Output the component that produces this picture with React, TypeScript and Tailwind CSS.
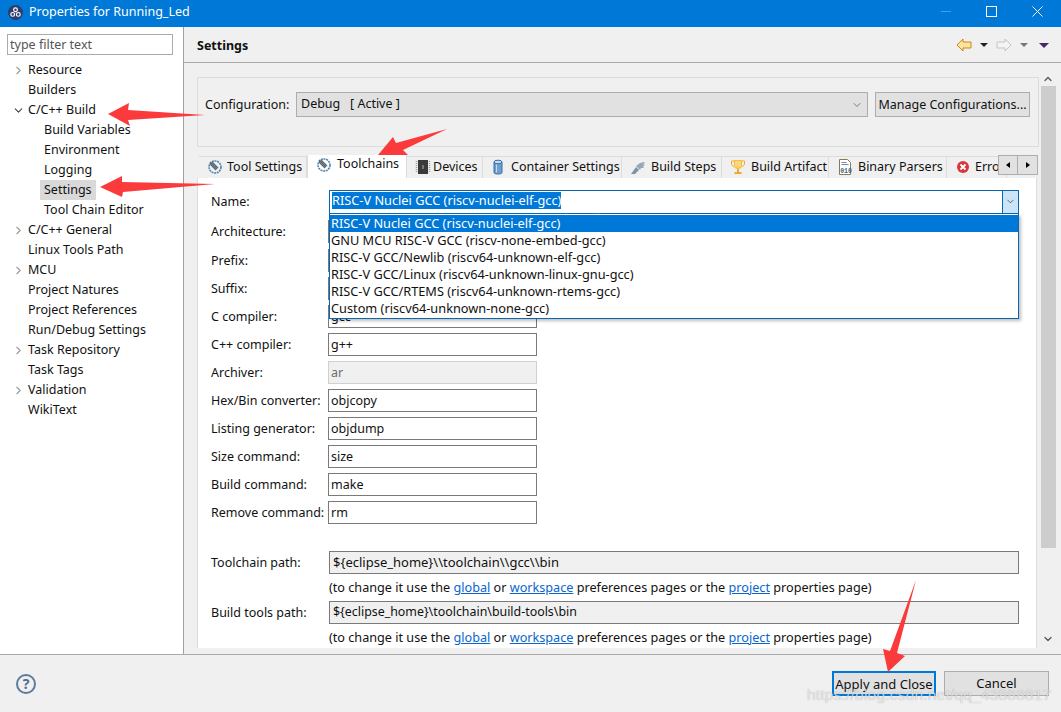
import React from 'react';
import { ChevronDown, ChevronRight, ChevronUp } from 'lucide-react';

const font = { fontFamily: '"Noto Sans", "Open Sans", sans-serif' };

const tree = [
  { label: 'Resource', arrow: 'right', depth: 0 },
  { label: 'Builders', depth: 0 },
  { label: 'C/C++ Build', arrow: 'down', depth: 0 },
  { label: 'Build Variables', depth: 1 },
  { label: 'Environment', depth: 1 },
  { label: 'Logging', depth: 1 },
  { label: 'Settings', depth: 1, selected: true },
  { label: 'Tool Chain Editor', depth: 1 },
  { label: 'C/C++ General', arrow: 'right', depth: 0 },
  { label: 'Linux Tools Path', depth: 0 },
  { label: 'MCU', arrow: 'right', depth: 0 },
  { label: 'Project Natures', depth: 0 },
  { label: 'Project References', depth: 0 },
  { label: 'Run/Debug Settings', depth: 0 },
  { label: 'Task Repository', arrow: 'right', depth: 0 },
  { label: 'Task Tags', depth: 0 },
  { label: 'Validation', arrow: 'right', depth: 0 },
  { label: 'WikiText', depth: 0 },
];

const fields = [
  { label: 'Architecture:', value: '' },
  { label: 'Prefix:', value: '' },
  { label: 'Suffix:', value: '' },
  { label: 'C compiler:', value: 'gcc' },
  { label: 'C++ compiler:', value: 'g++' },
  { label: 'Archiver:', value: 'ar', disabled: true },
  { label: 'Hex/Bin converter:', value: 'objcopy' },
  { label: 'Listing generator:', value: 'objdump' },
  { label: 'Size command:', value: 'size' },
  { label: 'Build command:', value: 'make' },
  { label: 'Remove command:', value: 'rm' },
];

const options = [
  'RISC-V Nuclei GCC (riscv-nuclei-elf-gcc)',
  'GNU MCU RISC-V GCC (riscv-none-embed-gcc)',
  'RISC-V GCC/Newlib (riscv64-unknown-elf-gcc)',
  'RISC-V GCC/Linux (riscv64-unknown-linux-gnu-gcc)',
  'RISC-V GCC/RTEMS (riscv64-unknown-rtems-gcc)',
  'Custom (riscv64-unknown-none-gcc)',
];

const GaugeIcon = () => (
  <svg width="16" height="16" viewBox="0 0 16 16" fill="none">
    <circle cx="8" cy="8" r="6" stroke="#4a86ad" strokeWidth="1.6" strokeDasharray="2 0.7" />
    <path d="M3 3l7 7M5 3l6 6M3 5l6 6" stroke="#5c6670" strokeWidth="1.2" />
  </svg>
);

const ChipIcon = () => (
  <svg width="16" height="16" viewBox="0 0 16 16">
    <rect x="3" y="1" width="10" height="14" fill="#3a3a3a" />
    <path d="M1.5 2v12M14.5 2v12" stroke="#999" strokeWidth="1.5" strokeDasharray="1 1" />
    <rect x="7" y="6" width="2" height="4" fill="#777" />
  </svg>
);

const CylinderIcon = () => (
  <svg width="16" height="16" viewBox="0 0 16 16">
    <path d="M3 3v10.500c0 2 8 2 8 0V3z" fill="#6d9fcf" stroke="#3a6ea5" />
    <ellipse cx="7" cy="3" rx="4" ry="1.800" fill="#c5dcf0" stroke="#3a6ea5" />
    <path d="M5.500 5.500v8" stroke="#c5dcf0" />
  </svg>
);

const StepsIcon = () => (
  <svg width="16" height="16" viewBox="0 0 16 16">
    <path d="M1 15l5-7 3 3-4 4z" fill="#7d93a8" />
    <path d="M6 7l4-3 4-1 1 1-2 1 2 1-2 1 1 2-3 0-1 2z" fill="#97a7b5" />
  </svg>
);

const TrophyIcon = () => (
  <svg width="16" height="16" viewBox="0 0 16 16" fill="none">
    <path d="M4 1h8v6c0 2-2 3-4 3S4 9 4 7z" fill="#f7bd3f" />
    <path d="M4 2H1.500v3c0 1 1 2 2.500 2.500M12 2h2.500v3c0 1-1 2-2.500 2.500" stroke="#f0a92c" />
    <path d="M6 2v6M8 2v7M10 2v6" stroke="#fff0bf" />
    <rect x="7" y="10" width="2" height="3" fill="#f0a92c" />
    <rect x="4.500" y="13" width="7" height="2" fill="#f0a92c" />
  </svg>
);

const BinaryIcon = () => (
  <svg width="16" height="16" viewBox="0 0 16 16" fill="none">
    <path d="M2.500.5h8l3 3v12h-11z" fill="#fff" stroke="#8a7a4e" />
    <path d="M4.500 3.500h5M4.500 5.500h7" stroke="#6d8fb5" />
    <text x="3.200" y="13.500" fontSize="6.500" fontWeight="700" fill="#3d5f86" fontFamily="Liberation Mono, monospace">010</text>
  </svg>
);

const ErrorIcon = () => (
  <svg width="16" height="16" viewBox="0 0 16 16">
    <circle cx="8" cy="8" r="6" fill="#d8363f" />
    <path d="M5.500 5.500l5 5M10.500 5.500l-5 5" stroke="#fff" strokeWidth="1.800" />
  </svg>
);

const tabs = [
  { label: 'Tool Settings', icon: <GaugeIcon />, w: 'w-[108px]', iconGap: 'gap-[4px]' },
  { label: 'Toolchains', icon: <GaugeIcon />, active: true, w: 'w-[100px]', iconGap: 'gap-[5px]' },
  { label: 'Devices', icon: <ChipIcon />, w: 'w-[76px]', iconGap: 'gap-[2px]' },
  { label: 'Container Settings', icon: <CylinderIcon />, w: 'w-[139px]', iconGap: 'gap-[4px]' },
  { label: 'Build Steps', icon: <StepsIcon />, w: 'w-[100px]', iconGap: 'gap-[5px]' },
  { label: 'Build Artifact', icon: <TrophyIcon />, w: 'w-[107px]', iconGap: 'gap-[5px]' },
  { label: 'Binary Parsers', icon: <BinaryIcon />, w: 'w-[118px]', iconGap: 'gap-[5px]' },
  { label: 'Error', icon: <ErrorIcon />, w: 'w-[60px]', iconGap: 'gap-[4px]' },
];

const Arrows = () => (
  <svg className="absolute inset-0 pointer-events-none" width="1061" height="712">
    <g fill="#fb3a3c">
      <polygon points="108,114 129,103 128,110 205,115 128,120 130,126" />
      <polygon points="100,187 122,176 122,182 215,184 123,192 122,197" />
      <polygon points="378,155 393,137 396,143 447,129 403,150 408,155" />
      <polygon points="577,223 599,213 598,219 722,227 598,230 599,234" />
      <polygon points="916,580 897,653 905,656 888,672 883,649 890,651" />
    </g>
  </svg>
);

const PrefsHint = () => (
  <p className="h-[27px] pl-[118px] pt-[5px] leading-[17px] text-[12.65px] whitespace-nowrap">
    (to change it use the <a className="text-[#0a66cc] underline">global</a> or{' '}
    <a className="text-[#0a66cc] underline">workspace</a> preferences pages or the{' '}
    <a className="text-[#0a66cc] underline">project</a> properties page)
  </p>
);

export default function App() {
  return (
    <div className="relative w-[1061px] h-[712px] overflow-hidden bg-[#f0f0f0] text-[12.5px] text-[#111] flex flex-col" style={font}>
      {/* title bar */}
      <div className="h-[27px] bg-[#0078d7] text-white flex items-center shrink-0">
        <svg className="ml-[8px] mb-[3px]" width="15" height="15" viewBox="0 0 16 16">
          <circle cx="8" cy="8" r="8" fill="#2c3e70" />
          <g fill="none" stroke="#fff" strokeWidth="1.300">
            <circle cx="8" cy="5" r="2" />
            <circle cx="5" cy="10" r="2" />
            <circle cx="11" cy="10" r="2" />
          </g>
        </svg>
        <span className="ml-[6px] mb-[3px]">Properties for Running_Led</span>
        <div className="ml-auto flex items-center pb-[5px] pr-[18px]">
          <span className="w-[10px] h-px bg-[#3f9fe8]" />
          <span className="ml-[35px] w-[11px] h-[11px] border border-white" />
          <svg className="ml-[35px]" width="11" height="11" viewBox="0 0 11 11">
            <path d="M.5.500l10 10M10.500.500l-10 10" stroke="#fff" />
          </svg>
        </div>
      </div>

      <div className="flex flex-1 min-h-0">
        {/* left tree */}
        <aside className="w-[184px] shrink-0 bg-white border-r border-[#a0a0a0] pt-[7px] pl-[7px]">
          <div className="w-[166px] h-[21px] border border-[#ababab] pl-[2px] leading-[20px] text-[#555]">type filter text</div>
          <ul className="mt-[5px]">
            {tree.map((item) => (
              <li key={item.label} className="h-[20px] flex items-center">
                <span className="w-[21px] shrink-0 flex justify-start pl-[5px]">
                  {item.arrow === 'right' && <ChevronRight className="w-[13px] h-[13px] text-[#9a9a9a]" strokeWidth={2} />}
                  {item.arrow === 'down' && <ChevronDown className="w-[13px] h-[13px] text-[#444]" strokeWidth={2} />}
                </span>
                <span className={item.depth ? 'ml-[16px]' : ''}>
                  <span className={item.selected ? 'inline-block bg-[#d9d9d9] -ml-[4px] px-[4px] leading-[20px]' : ''}>{item.label}</span>
                </span>
              </li>
            ))}
          </ul>
        </aside>

        <main className="flex-1 min-w-0 flex flex-col">
          {/* page heading */}
          <div className="h-[36px] shrink-0 border-b border-[#a9a9a9] flex items-center pl-[13px] pt-[4px]">
            <h1 className="font-bold">Settings</h1>
            <div className="ml-auto flex items-center mr-[12px] mb-[3px]">
              <svg width="16" height="14" viewBox="0 0 16 14"><path d="M1 7l6-6v3h8v6H7v3z" fill="#fde49a" stroke="#c9861c" /></svg>
              <span className="ml-[8px] w-0 h-0 border-x-[4px] border-x-transparent border-t-[4px] border-t-[#222]" />
              <svg className="ml-[8px]" width="16" height="14" viewBox="0 0 16 14"><path d="M15 7L9 1v3H1v6h8v3z" fill="#f4f4f4" stroke="#c4c4c4" /></svg>
              <span className="ml-[8px] w-0 h-0 border-x-[4px] border-x-transparent border-t-[4px] border-t-[#777]" />
              <span className="ml-[11px] w-0 h-0 border-x-[5px] border-x-transparent border-t-[5px] border-t-[#43276f]" />
            </div>
          </div>

          <div className="flex-1 min-h-0 flex pl-[13px] pb-[6px]">
            <div className="w-[842px] pt-[14px] flex flex-col">
              {/* configuration */}
              <div className="h-[70px] border border-[#dcdcdc] pl-[7px] pt-[14px] flex items-start">
                <span className="w-[91px] leading-[25px]">Configuration:</span>
                <div className="w-[572px] h-[25px] bg-[#e1e1e1] border border-[#adadad] pl-[4px] flex items-center justify-between pr-[4px]">
                  <span className="whitespace-pre">Debug   [ Active ]</span>
                  <ChevronDown className="w-[12px] h-[12px] text-[#555]" strokeWidth={1.500} />
                </div>
                <button className="ml-[7px] w-[155px] h-[25px] pt-[1px] bg-[#e1e1e1] border border-[#adadad] text-center whitespace-nowrap">Manage Configurations...</button>
              </div>

              {/* tabs */}
              <div className="relative mt-[8px] h-[23px] flex items-end pl-[2px] overflow-hidden shrink-0">
                {tabs.map((tab) => (
                  <div
                    key={tab.label}
                    className={`${tab.w} shrink-0 flex items-center pl-[8px] whitespace-nowrap border-r border-[#dcdcdc] ${tab.iconGap} ${
                      tab.active ? 'h-[24px] bg-white border-l border-t pb-[4px] border-[#dcdcdc]' : 'h-[22px] pb-[1px] border-t border-[#dcdcdc]'
                    }`}
                  >
                    {tab.icon}
                    <span>{tab.label}</span>
                  </div>
                ))}
                <div className="absolute right-[1px] top-[0px] flex h-[20px]">
                  <div className="w-[20px] bg-[#e1e1e1] border border-[#adadad] flex items-center justify-center">
                    <span className="w-0 h-0 border-y-[3px] border-y-transparent border-r-[4px] border-r-black" />
                  </div>
                  <div className="w-[20px] bg-[#e1e1e1] border border-l-0 border-[#adadad] flex items-center justify-center">
                    <span className="w-0 h-0 border-y-[3px] border-y-transparent border-l-[4px] border-l-black" />
                  </div>
                </div>
              </div>

              {/* tab body */}
              <div className="relative flex-1 min-h-0 bg-white border-x border-[#dcdcdc] w-[840px] pl-[13px] pt-[12px] overflow-hidden">
                <div className="h-[23px] flex items-center">
                  <span className="w-[118px] pt-[2px]">Name:</span>
                  <div className="w-[690px] h-[24px] border border-[#0a66b0] flex items-center pl-[2px] justify-between">
                    <span className="bg-[#0078d7] text-white leading-[17px] text-[12.75px] mb-[2px]">{options[0]}</span>
                    <span className="w-[16px] h-full bg-[#cce4f7] border-l border-[#0a66b0] flex items-center justify-center">
                      <ChevronDown className="w-[11px] h-[11px] text-[#333]" strokeWidth={1.500} />
                    </span>
                  </div>
                </div>
                <ul className="absolute z-10 left-[131px] top-[36px] w-[690px] h-[105px] bg-white border border-[#0a66b0] shadow-[2px_2px_3px_rgba(0,0,0,0.25)] border-t-0 text-[12.75px]">
                  {options.map((opt, i) => (
                    <li key={opt} className={`h-[17px] leading-[17px] pl-[1px] ${i === 0 ? 'bg-[#0078d7] text-white mt-[1px]' : ''}`}>{opt}</li>
                  ))}
                </ul>

                <div className="mt-[7px] flex flex-col gap-[5px]">
                  {fields.map((f) => (
                    <div key={f.label} className="h-[23px] flex items-center first:mb-[1px]">
                      <span className="w-[117px] pt-[2px] whitespace-nowrap">{f.label}</span>
                      <div className={`w-[209px] h-[23px] border flex items-center pl-[2px] pt-[2px] ${f.disabled ? 'bg-[#f0f0f0] border-[#d0d0d0] text-[#6d6d6d]' : 'border-[#7a7a7a]'}`}>{f.value}</div>
                    </div>
                  ))}
                </div>

                <div className="mt-[27px] h-[23px] flex items-center">
                  <span className="w-[118px] pt-[2px]">Toolchain path:</span>
                  <div className="w-[690px] h-[23px] bg-[#f0f0f0] border border-[#7a7a7a] flex items-center pl-[3px] text-[13px]">{'${eclipse_home}\\\\toolchain\\\\gcc\\\\bin'}</div>
                </div>
                <PrefsHint />
                <div className="h-[23px] flex items-center">
                  <span className="w-[118px] pt-[2px]">Build tools path:</span>
                  <div className="w-[690px] h-[23px] bg-[#f0f0f0] border border-[#7a7a7a] flex items-center pl-[3px] text-[12.4px]">{'${eclipse_home}\\toolchain\\build-tools\\bin'}</div>
                </div>
                <PrefsHint />
              </div>
            </div>

            {/* scrollbar */}
            <div className="w-[16px] ml-[1px] mt-[7px] flex flex-col items-center">
              <ChevronUp className="w-[12px] h-[12px] mt-[3px] text-[#555]" strokeWidth={2.500} />
              <div className="w-[15px] mt-[1px] h-[462px] bg-[#cdcdcd]" />
              <ChevronDown className="w-[12px] h-[12px] mt-auto mb-[3px] text-[#555]" strokeWidth={2.500} />
            </div>
          </div>
        </main>
      </div>

      {/* footer */}
      <footer className="h-[58px] shrink-0 border-t border-[#a9a9a9] flex items-center pr-[12px] relative">
        <span className="ml-[16px] w-[20px] h-[20px] rounded-full border-2 border-[#5f7a9c] flex items-center justify-center text-[14px] font-bold text-[#4f6d93]">?</span>
        <div className="ml-auto flex gap-[8px] mt-[-1px] text-[13px]">
          <button className="w-[104px] h-[25px] pt-[1px] bg-[#e1e1e1] border-2 border-[#0078d7] leading-[21px]">Apply and Close</button>
          <button className="w-[105px] h-[25px] pt-[1px] bg-[#e1e1e1] border border-[#adadad]">Cancel</button>
        </div>
        <span className="absolute left-[807px] top-[28px] text-[15.5px] text-white/70 tracking-[0.2px] [text-shadow:0_0_1px_rgba(0,0,0,0.35)]" style={{ fontFamily: '"Liberation Sans", sans-serif' }}>https://blog.csdn.net/qq_43888817</span>
      </footer>

      <Arrows />
    </div>
  );
}
